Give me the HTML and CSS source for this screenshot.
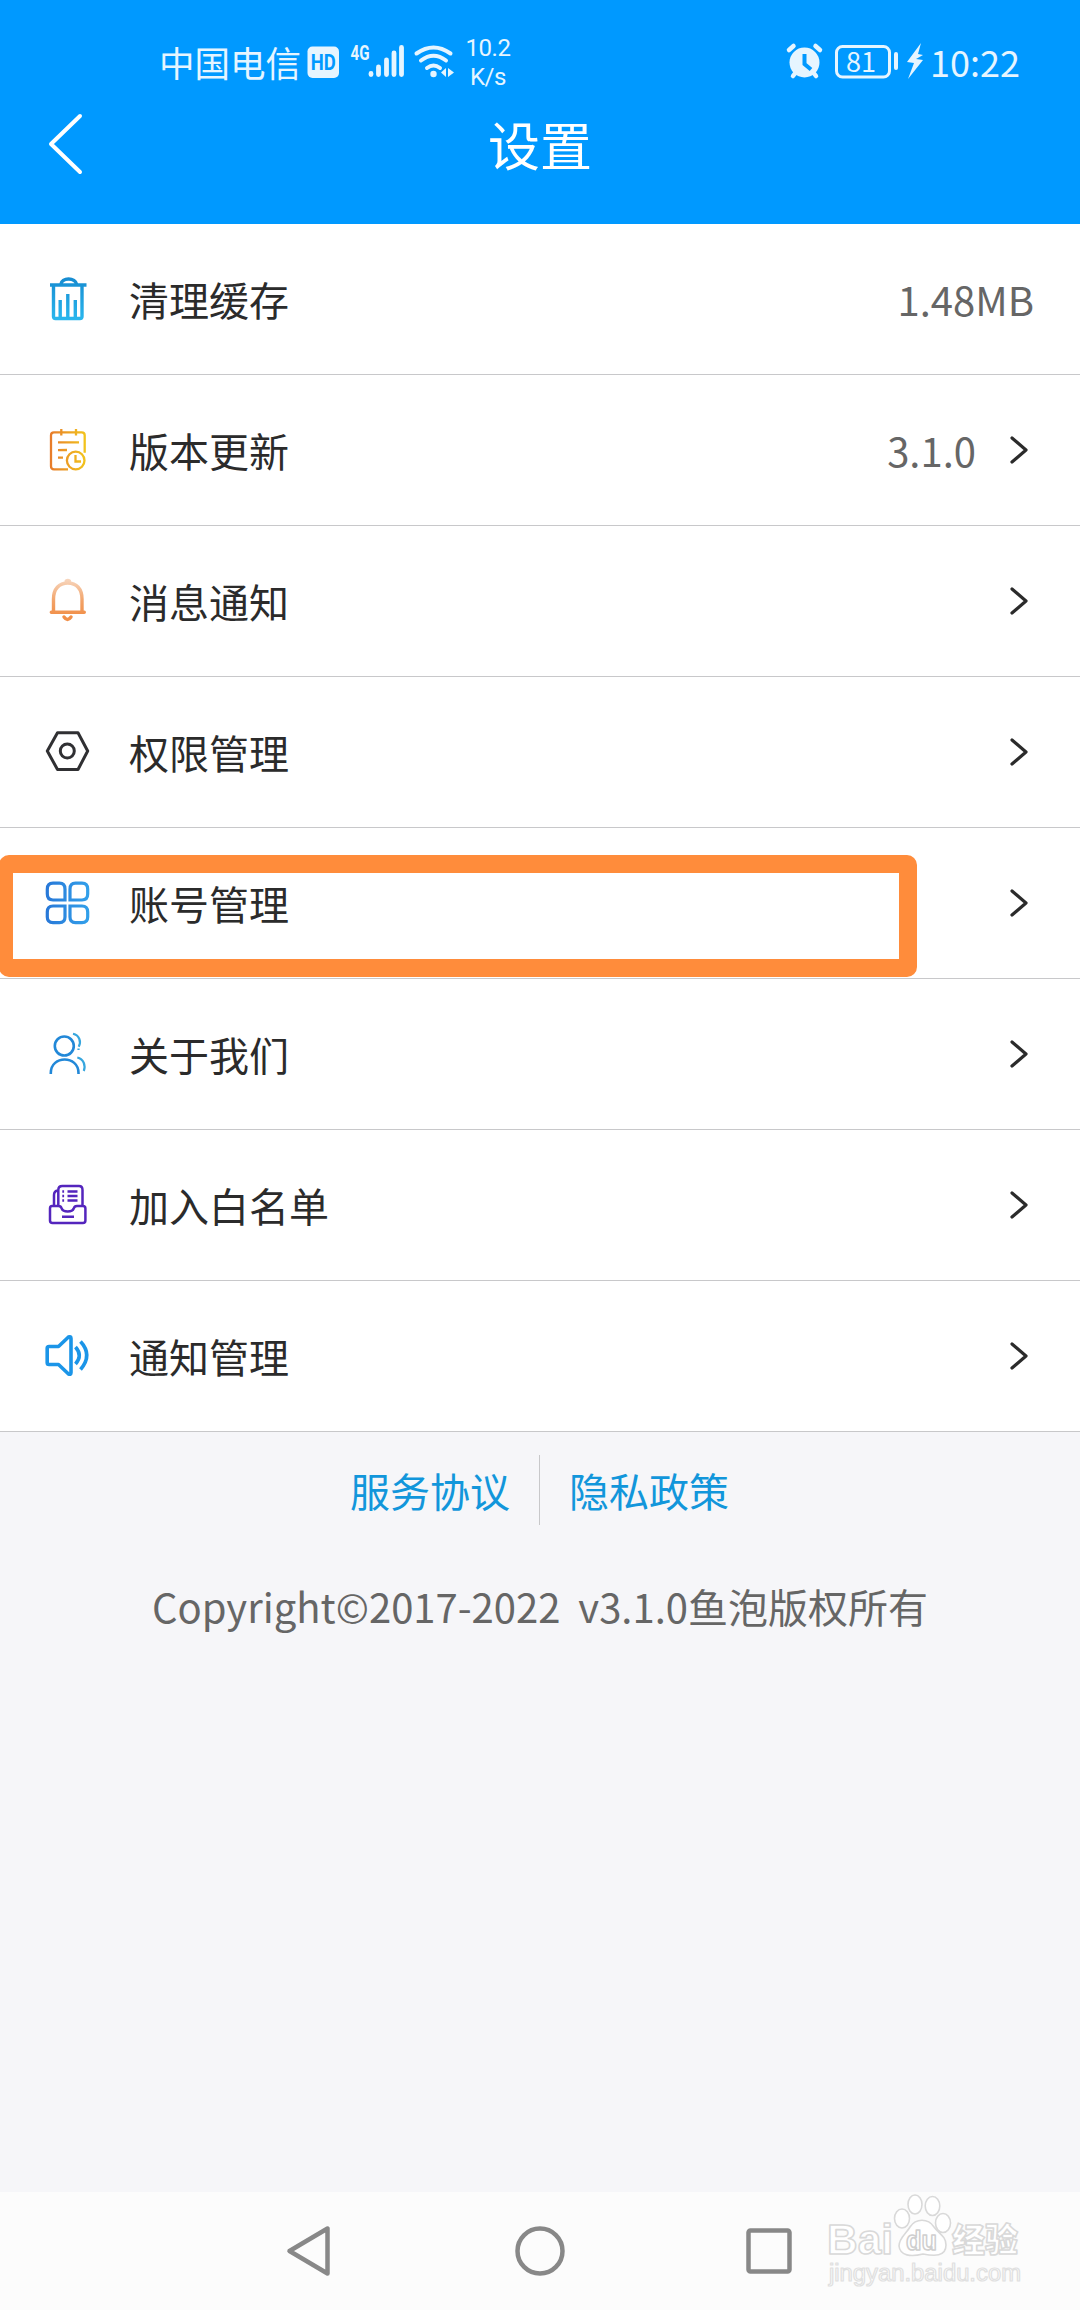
FILE: index.html
```html
<!DOCTYPE html>
<html lang="zh-CN">
<head>
<meta charset="utf-8">
<title>设置</title>
<link rel="stylesheet" href="styles.css">
</head>
<body>
<div class="screen">
  <header class="header">
    <div class="status">
      <div class="status-left">
        <span class="carrier">中国电信</span>
        <svg class="signal" width="152" height="44" viewBox="0 0 152 44">
          <rect x="1.500" y="7.500" width="31.500" height="31.500" rx="5" fill="#e6f5ff"/>
          <text class="hd" x="17.200" y="31" text-anchor="middle" textLength="25" lengthAdjust="spacingAndGlyphs">HD</text>
          <text class="net" x="44.500" y="20.500" textLength="19" lengthAdjust="spacingAndGlyphs">4G</text>
          <path class="bars" d="M65 34.500v1M72.500 28v7.500M80.500 21v14.500M88 14v21.500M95.500 8.500v27"/>
          <path class="waves" d="M110.500 14.500q17-12 34 0M115 21.500q12.500-9.500 25 0M121 29q6.500-5 13 0"/>
          <circle cx="127.500" cy="35" r="3.200" fill="#e6f5ff"/>
          <path d="M135 33.500l5-4.500v9zM142 29l6 4.500-6 4.500z" fill="#e6f5ff"/>
        </svg>
        <span class="speed"><span>10.2</span><span>K/s</span></span>
      </div>
      <div class="status-right">
        <svg width="140" height="44" viewBox="0 0 140 44" fill="none">
          <circle cx="19.500" cy="23.500" r="15" fill="#e6f5ff"/>
          <path d="M4 11l4.500-4M35 11l-4.500-4M8 37l3-4M31 37l-3-4" stroke="#e6f5ff" stroke-width="4.500" stroke-linecap="round"/>
          <path d="M19.500 15v10l6.500 5.500" stroke="#0099ff" stroke-width="4"/>
          <rect x="51.500" y="7.500" width="53" height="30.500" rx="6" stroke="#e6f5ff" stroke-width="3"/>
          <path d="M111 15v14" stroke="#e6f5ff" stroke-width="4" stroke-linecap="round"/>
          <text class="battery" x="76" y="32.500" text-anchor="middle">81</text>
          <path d="M136 4L122 23l7 1-6 16 15-19-7-1 7-4-5-1z" fill="#e6f5ff"/>
        </svg>
        <span class="clock">10:22</span>
      </div>
    </div>
    <div class="titlebar">
      <svg class="back" width="60" height="70" viewBox="0 0 60 70"><path d="M41 7L12 35l29 28"/></svg>
      <h1>设置</h1>
    </div>
  </header>

  <main class="list">
    <div class="row">
      <svg class="icon" viewBox="0 0 60 60" stroke="url(#sky)" stroke-width="3.400">
        <defs><linearGradient id="sky" gradientUnits="userSpaceOnUse" x1="0" y1="8" x2="0" y2="51"><stop offset="0" stop-color="#168bd0"/><stop offset="1" stop-color="#2ab7ee"/></linearGradient></defs>
        <path d="M12 16h36.500M22.500 16c1-8 15-8 16.500 0M15.500 16v31.500q0 2 2 2h24.500q2 0 2-2V16M22.200 31v18M29.800 25v24M37.300 31v18"/>
      </svg>
      <span class="label">清理缓存</span><span class="value last">1.48MB</span>
    </div>
    <div class="row">
      <svg class="icon" viewBox="0 0 60 60" stroke="url(#amber)" stroke-width="2.300">
        <defs><linearGradient id="amber" gradientUnits="userSpaceOnUse" x1="12" y1="0" x2="48" y2="0"><stop offset="0" stop-color="#e77b2b"/><stop offset="1" stop-color="#f2c51c"/></linearGradient></defs>
        <path d="M30 49.300H16q-3 0-3-3V15.300q0-3 3-3h27.700q3 0 3 3v17.500M23.300 9v6.500M38 9v6.500M20 22.400l21-.1M20 30.100l9-.1M20 37.700l5-.1M37.500 35v6.500h5.500"/><circle cx="37.700" cy="40.500" r="8.800"/>
      </svg>
      <span class="label">版本更新</span><span class="value">3.1.0</span>
      <svg class="chevron" viewBox="0 0 20 30"><path d="M3 3l14 12L3 27"/></svg>
    </div>
    <div class="row">
      <svg class="icon" viewBox="0 0 60 60" stroke="url(#peach)" stroke-width="3.400">
        <defs><linearGradient id="peach" gradientUnits="userSpaceOnUse" x1="0" y1="8" x2="0" y2="45"><stop offset="0" stop-color="#f7d6be"/><stop offset=".6" stop-color="#f2a267"/><stop offset="1" stop-color="#f18f48"/></linearGradient></defs>
        <path stroke-linejoin="round" stroke-linecap="round" d="M13.300 41.300h33M15.500 41V28C15.500 18 21 12 29.800 12s14.200 6 14.200 16v13M28.300 10q1.500-1 3 0M26 46q3.500 5 7 0"/>
      </svg>
      <span class="label">消息通知</span>
      <svg class="chevron" viewBox="0 0 20 30"><path d="M3 3l14 12L3 27"/></svg>
    </div>
    <div class="row">
      <svg class="icon" viewBox="0 0 60 60" stroke="#303033" stroke-width="3" stroke-linejoin="round">
        <path d="M19.500 10.800h20.500L49.700 29 40 47.500H19.500L9.300 29z"/><circle cx="29.300" cy="29" r="7"/>
      </svg>
      <span class="label">权限管理</span>
      <svg class="chevron" viewBox="0 0 20 30"><path d="M3 3l14 12L3 27"/></svg>
    </div>
    <div class="row marked">
      <svg class="icon" viewBox="0 0 60 60" stroke="url(#azure)" stroke-width="3.200">
        <defs><linearGradient id="azure" gradientUnits="userSpaceOnUse" x1="8" y1="0" x2="51" y2="0"><stop offset="0" stop-color="#2878d8"/><stop offset="1" stop-color="#32a0ea"/></linearGradient></defs>
        <path d="M15 10.200h6.500q5.500 0 5.500 6V27H15q-5.700 0-5.700-6v-4.800q0-6 5.700-6zM37.500 10.200H44q5.700 0 5.700 6V21q0 6-5.700 6H32V16.200q0-6 5.500-6zM15 33h12v11q0 5.700-5.500 5.700H15q-5.700 0-5.700-5.700v-5q0-6 5.700-6zM32 33h12q5.700 0 5.700 6v5q0 5.700-5.700 5.700h-6.500q-5.500 0-5.500-5.700z"/>
      </svg>
      <span class="label">账号管理</span>
      <svg class="chevron" viewBox="0 0 20 30"><path d="M3 3l14 12L3 27"/></svg>
      <div class="highlight"></div>
    </div>
    <div class="row">
      <svg class="icon" viewBox="0 0 60 60" stroke="#2288d8" stroke-width="2.600">
        <circle cx="26.300" cy="22" r="9.500"/>
        <path d="M12.800 50v-1c0-18 27.700-18 27.700 0v1"/>
        <path stroke="#36a6de" stroke-width="2.200" d="M35 9.800c6.500 1.500 8.500 8 5.700 13M40.500 24.500v1.500M39.300 33.500c6.500 1.500 8.500 8 6.500 13.500"/>
      </svg>
      <span class="label">关于我们</span>
      <svg class="chevron" viewBox="0 0 20 30"><path d="M3 3l14 12L3 27"/></svg>
    </div>
    <div class="row">
      <svg class="icon" viewBox="0 0 60 60" stroke="#5425bd" stroke-width="2.500" stroke-linejoin="round">
        <path d="M20.300 30V15q0-4 4-4H41q3.500 0 3.500 4v15.500M16 30.500V20q0-4 4-4.500M24.300 16.500h1.800M29.500 16.500h10M24.300 21h1.800M29.500 21h10M24.300 25.500h1.800M29.500 25.500h10M24 41.700h12M14 31h6.500q2.500 0 3.200 2.500c1.500 4 10.500 4 12 0q.7-2.500 3.200-2.500h6q2.500 0 2.500 2.500v12q0 2.500-2.500 2.500H14.500q-2.500 0-2.500-2.500v-12Q12 31 14 31z"/>
      </svg>
      <span class="label">加入白名单</span>
      <svg class="chevron" viewBox="0 0 20 30"><path d="M3 3l14 12L3 27"/></svg>
    </div>
    <div class="row">
      <svg class="icon" viewBox="0 0 60 60" stroke="#1b95e8" stroke-width="3.600" stroke-linejoin="round">
        <path d="M11 20.500h9.500L30.500 11q2.500-1 2.500 1.500v34q0 2.500-2.500 1.500l-10-9.500H11q-1.800 0-1.800-1.800V22.300q0-1.800 1.800-1.800zM37.500 21q7.500 8.500 0 17M42.500 15.500q12.500 13.500 0 28"/>
      </svg>
      <span class="label">通知管理</span>
      <svg class="chevron" viewBox="0 0 20 30"><path d="M3 3l14 12L3 27"/></svg>
    </div>
  </main>

  <footer class="footer">
    <nav class="links"><a>服务协议</a><a>隐私政策</a></nav>
    <p class="copyright">Copyright©2017-2022&nbsp; v3.1.0鱼泡版权所有</p>
  </footer>

  <div class="navbar">
    <svg viewBox="0 0 60 60"><path d="M46.500 7.500v45L8.500 30z"/></svg>
    <svg viewBox="0 0 60 60"><circle cx="30" cy="30" r="22.500"/></svg>
    <svg viewBox="0 0 60 60"><rect x="9.500" y="9.500" width="41" height="41" rx="2"/></svg>
    <svg class="watermark" viewBox="0 0 220 110">
      <g class="mark">
        <text class="brand" x="7" y="62" font-size="43" textLength="66" lengthAdjust="spacingAndGlyphs">Bai</text>
        <ellipse cx="82" cy="26.500" rx="7.500" ry="9.500"/><ellipse cx="95" cy="12.500" rx="7" ry="9.500"/><ellipse cx="112.500" cy="14" rx="7.300" ry="9.500"/><ellipse cx="123" cy="31" rx="7.500" ry="9.500"/>
        <path d="M90 35c6-9 18-9 24 0 5 7 12 9 12 18 0 12-12 11-23 9-12 3-23 2-24-8 0-8 7-12 11-19z"/>
        <text class="brand du" x="86" y="57.500" font-size="27" textLength="31" lengthAdjust="spacingAndGlyphs">du</text>
        <text class="cn" x="132" y="60" font-size="33">经验</text>
        <text class="url" x="9" y="88.500" font-size="23" textLength="192" lengthAdjust="spacingAndGlyphs">jingyan.baidu.com</text>
      </g>
    </svg>
  </div>
</div>
</body>
</html>
```
FILE: styles.css
```css
* { box-sizing: border-box; }
body {
  margin: 0;
  font-family: "Noto Sans CJK SC", sans-serif;
  color: #2b2b2b;
}
.screen {
  width: 1080px;
  height: 2310px;
  display: flex;
  flex-direction: column;
  background: #f6f6f9;
}
svg { display: block; flex: none; }

.header { height: 224px; background: #0099ff; color: #fff; }
.status {
  height: 100px;
  padding: 0 60px 0 159px;
  display: flex;
  justify-content: space-between;
  color: #e6f5ff;
}
.status-left, .status-right { display: flex; align-items: flex-start; }
.status svg { margin-top: 39px; }
.carrier { font-size: 35.500px; line-height: 50px; padding-top: 37px; width: 147px; }
.hd { font: bold 22px Roboto, sans-serif; fill: #0099ff; }
.net { font: bold 20px Roboto, sans-serif; fill: #e6f5ff; }
.bars { stroke: #e6f5ff; stroke-width: 4.800; stroke-linecap: round; }
.waves { fill: none; stroke: #e6f5ff; stroke-width: 4; stroke-linecap: round; }
.speed {
  width: 60px;
  padding-top: 34px;
  display: flex;
  flex-direction: column;
  align-items: center;
  font: 24px/29px Roboto, sans-serif;
  letter-spacing: -0.500px;
}
.battery { font: 27px "Noto Sans CJK SC", sans-serif; fill: #e6f5ff; }
.clock { font-size: 36px; line-height: 50px; padding-top: 36px; margin-left: 5px; }
.titlebar {
  height: 88px;
  display: grid;
  grid-template-columns: 140px 1fr 140px;
  align-items: center;
}
.back { margin-left: 39px; fill: none; stroke: #fff; stroke-width: 4; stroke-linecap: round; stroke-linejoin: round; }
h1 { margin: 0; font-size: 52px; font-weight: 400; line-height: 80px; text-align: center; }

.list { background: #fff; }
.row {
  height: 151px;
  padding: 0 51px 0 38px;
  border-bottom: 1px solid #c8c8ca;
  display: flex;
  align-items: center;
}
.icon { width: 60px; height: 60px; fill: none; margin-right: 31px; }
.label { flex: 1; font-size: 40px; line-height: 60px; }
.value { font-size: 40px; line-height: 60px; color: #666; margin-right: 33px; }
.value.last { margin-right: -5px; }
.chevron { width: 20px; height: 30px; fill: none; stroke: #2b2b2b; stroke-width: 3.200; stroke-linecap: round; stroke-linejoin: round; }
.marked { position: relative; }
.highlight {
  position: absolute;
  left: -1px;
  top: 27px;
  width: 918px;
  height: 122px;
  border: 18px solid #ff8c3b;
  border-left-width: 14px;
  border-radius: 10px;
}

.footer { flex: 1; padding-top: 23px; }
.links { display: flex; justify-content: center; font-size: 40px; line-height: 70px; color: #1296db; }
.links a { padding: 0 30px; }
.links a + a { border-left: 1px solid #c8c8ca; padding: 0 31px 0 29px; margin-left: -1px; }
.copyright { margin: 51px 0 0; font-size: 40px; line-height: 60px; text-align: center; color: #666; }

.navbar {
  position: relative;
  height: 118px;
  padding: 0 281px;
  display: flex;
  justify-content: center;
  align-items: center;
  gap: 169px;
  background: #fcfcfc;
}
.navbar svg { width: 60px; height: 60px; fill: none; stroke: #888; stroke-width: 4.500; stroke-linejoin: round; }
.navbar .watermark { position: absolute; left: 820px; top: 0; width: 220px; height: 110px; }
.navbar .mark { fill: #fff; stroke: #d9d9d9; stroke-width: 1.600; }
.brand { font-family: "Liberation Sans", sans-serif; font-weight: 700; }
.du { fill: #fff; stroke: #cfcfcf; }
.cn { font-family: "Noto Sans CJK SC", sans-serif; font-weight: 900; }
.url { font-family: "Liberation Sans", sans-serif; stroke-width: 1.200; stroke: #e0e0e0; }
```
